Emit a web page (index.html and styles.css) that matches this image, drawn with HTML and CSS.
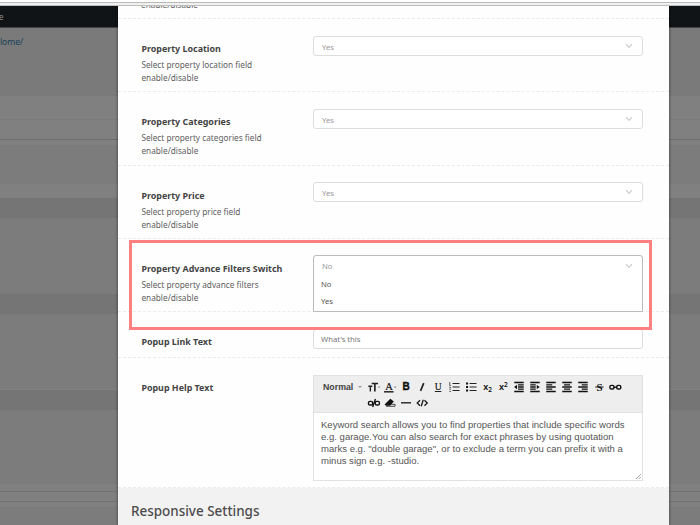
FILE: index.html
```html
<!DOCTYPE html>
<html lang="en">
<head>
<meta charset="utf-8">
<title>Property search element</title>
<link rel="stylesheet" href="styles.css">
</head>
<body>
<div class="chrome"></div>
<div class="page">
  <div class="adminbar">e</div>
  <div class="band top"><span class="crumb">lome/</span></div>
  <div class="band light a"></div>
  <div class="band light b"></div>
  <div class="band light gap1"></div>
  <div class="band mid c"></div>
  <div class="band light d"></div>
  <div class="band deep"></div>
  <div class="band mid e"></div>
  <div class="band deep"></div>
  <div class="band mid f"></div>
  <div class="band deep"></div>
  <div class="band mid g"></div>
  <div class="band light h"></div>
  <div class="band light i"></div>
  <div class="band light j"></div>
  <div class="band mid rest"></div>

  <div class="modal">
    <div class="row partial"><p class="desc">enable/disable</p></div>
    <div class="row">
      <div class="info"><h4>Property Location</h4><p class="desc">Select property location field<br>enable/disable</p></div>
      <div class="select">Yes<svg class="chev" viewBox="0 0 8 6"><path d="M1 1.2 4 4.4 7 1.2"/></svg></div>
    </div>
    <div class="row tall">
      <div class="info"><h4>Property Categories</h4><p class="desc">Select property categories field<br>enable/disable</p></div>
      <div class="select">Yes<svg class="chev" viewBox="0 0 8 6"><path d="M1 1.2 4 4.4 7 1.2"/></svg></div>
    </div>
    <div class="row raised">
      <div class="info"><h4>Property Price</h4><p class="desc">Select property price field<br>enable/disable</p></div>
      <div class="select">Yes<svg class="chev" viewBox="0 0 8 6"><path d="M1 1.2 4 4.4 7 1.2"/></svg></div>
    </div>
    <div class="row raised">
      <div class="info"><h4>Property Advance Filters Switch</h4><p class="desc">Select property advance filters<br>enable/disable</p></div>
      <div class="select open"><div class="current">No<svg class="chev" viewBox="0 0 8 6"><path d="M1 1.2 4 4.4 7 1.2"/></svg></div>
        <div class="option">No</div><div class="option">Yes</div></div>
    </div>
    <div class="row link">
      <div class="info"><h4>Popup Link Text</h4></div>
      <div class="input">What's this</div>
    </div>
    <div class="row help">
      <div class="info"><h4>Popup Help Text</h4></div>
      <div class="editor">
        <div class="toolbar">
          <div class="format">Normal<i class="tri"></i></div>
          <div class="tools">
            <svg viewBox="0 0 16 16"><path class="s" stroke-width="1.7" d="M5.6 4.5H12M8.8 4v8.5"/><path class="s" stroke-width="1.4" d="M2.3 7.2H6.3M4.3 7v5.5"/><path d="M11.8 7.5h2.6l-1.3 1.8z" fill="#888"/></svg>
            <svg viewBox="0 0 16 16"><text x="7" y="11" class="serif thin" font-size="10.5">A</text><path class="s" stroke-width="1.5" d="M2 12.8H11.5"/><path d="M11.8 7.5h2.6l-1.3 1.8z" fill="#888"/></svg>
            <svg viewBox="0 0 16 16"><text x="8" y="11.4" class="sans">B</text></svg>
            <svg viewBox="0 0 16 16"><path class="s" stroke-width="1.7" d="M9.7 4.2 6.5 11.8"/></svg>
            <svg viewBox="0 0 16 16"><text x="8.2" y="10.8" class="serif thin" font-size="9.5">U</text><path class="s" d="M4.8 12.5h6.5"/></svg>
            <svg viewBox="0 0 16 16"><path class="s" d="M6.5 4.5h7M6.5 8h7M6.5 11.5h7"/><path class="s" stroke-width=".7" d="M3.7 3v3M3.2 6.6H5M3.2 8.4H5M3.2 10.2H5M3.2 12.4H5"/></svg>
            <svg viewBox="0 0 16 16"><path class="s" d="M6.5 4.5h7M6.5 8h7M6.5 11.5h7"/><path class="s2" d="M3 4.5h2M3 8h2M3 11.5h2"/></svg>
            <svg viewBox="0 0 16 16"><text x="6.7" y="11" class="sub" font-size="9">x</text><text x="11" y="13" class="sub" font-size="6.5">2</text></svg>
            <svg viewBox="0 0 16 16"><text x="6.5" y="11" class="sub" font-size="9">x</text><text x="10.8" y="8" class="sub" font-size="6.5">2</text></svg>
            <svg viewBox="0 0 16 16"><path class="bars" d="M3.2 3.5h9.5M7 5.8h5.7M7 8h5.7M7 10.2h5.7M3.2 12.5h9.5"/><path d="M6 5.8v4.4L3 8z"/></svg>
            <svg viewBox="0 0 16 16"><path class="bars" d="M3.2 3.5h9.5M3.2 5.8h5.5M3.2 8h5.5M3.2 10.2h5.5M3.2 12.5h9.5"/><path d="M9.7 6v4l3-2z"/></svg>
            <svg viewBox="0 0 16 16"><path class="bars" d="M3.2 3.5h9.5M3.2 5.8h6M3.2 8h9.5M3.2 10.2h6M3.2 12.5h9.5"/></svg>
            <svg viewBox="0 0 16 16"><path class="bars" d="M3.2 3.5h9.5M5 5.8h6M3.2 8h9.5M5 10.2h6M3.2 12.5h9.5"/></svg>
            <svg viewBox="0 0 16 16"><path class="bars" d="M3.2 3.5h9.5M6.7 5.8h6M3.2 8h9.5M6.7 10.2h6M3.2 12.5h9.5"/></svg>
            <svg viewBox="0 0 16 16"><text x="8.4" y="11.5" class="serif" font-size="11">S</text><path class="s" d="M4.2 8h8.4"/></svg>
            <svg viewBox="0 0 16 16"><g class="ring"><rect x="2.8" y="6.4" width="4.2" height="3.6" rx="1.6"/><rect x="9.6" y="6.4" width="4.2" height="3.6" rx="1.6"/><path d="M6.2 8.2h4"/></g></svg>
            <svg viewBox="0 0 16 16"><g class="ring"><rect x="2.4" y="6.4" width="4.2" height="3.6" rx="1.6"/><rect x="9.2" y="6.4" width="4.2" height="3.6" rx="1.6"/><path d="M9.4 4 6.6 12"/></g></svg>
            <svg viewBox="0 0 16 16"><path d="M8.3 3.8 11.8 6.5 8 10.8H4L2.5 9.5z"/><path class="s" stroke-width=".8" d="M4 11.3H13M9 9.3h4v2"/></svg>
            <svg viewBox="0 0 16 16"><path class="s" stroke-width="1.4" d="M3 7.8h10"/></svg>
            <svg viewBox="0 0 16 16"><path class="s" stroke-width="1.4" d="M6 5.3 3.2 8 6 10.7M10.4 5.3 13.2 8l-2.8 2.7M9.2 4.7 7.2 11.3"/></svg>
          </div>
        </div>
        <div class="text">Keyword search allows you to find properties that include specific words<br>e.g. garage.You can also search for exact phrases by using quotation<br>marks e.g. "double garage", or to exclude a term you can prefix it with a<br>minus sign e.g. -studio.<svg class="grip" viewBox="0 0 6 6"><path d="M0 6 6 0M3.3 6 6 3.3"/></svg></div>
      </div>
    </div>
    <div class="section">Responsive Settings</div>
  </div>
  <div class="highlight"></div>
</div>
</body>
</html>
```
FILE: styles.css
```css
* { box-sizing: border-box; }
body {
  margin: 0;
  width: 700px;
  height: 525px;
  overflow: hidden;
  display: flex;
  flex-direction: column;
  font-family: "Noto Sans", sans-serif;
  font-size: 8px;
  color: #555;
}
.chrome {
  flex: none;
  height: 6px;
  background: #f1f1f1;
  border-top: 2px solid #fff;
  border-bottom: 1px solid #bdbdbd;
  box-shadow: inset 0 1px #bababa;
}
.page {
  flex: 1;
  min-height: 0;
  position: relative;
  display: flex;
  flex-direction: column;
  background: #7c7c7c;
  overflow: hidden;
}
.adminbar {
  flex: none;
  height: 22px;
  background: #111417;
  border-bottom: 1px solid #444;
  color: #888;
  line-height: 22px;
  text-indent: -1px;
  font-size: 8px;
}
.band { flex: none; }
.light { background: #808080; }
.mid { background: #7c7c7c; }
.deep { background: #757575; height: 20px; }
.top { height: 68px; background: #7a7a7a; padding-top: 7px; }
.crumb { display: block; line-height: 14px; font-size: 8.6px; letter-spacing: -.1px; color: #163f58; }
.a { height: 24px; border-bottom: 1px solid #7b7b7b; }
.b { height: 20px; border-bottom: 1px solid #6d6d6d; }
.gap1 { height: 5px; }
.c { height: 39px; }
.d { height: 14px; }
.e { height: 76px; }
.f { height: 76px; border-bottom: 1px solid #818181; }
.g { height: 74px; }
.h { height: 8px; border-bottom: 1px solid #727272; }
.i { height: 10px; border-bottom: 1px solid #727272; }
.j { height: 5px; }
.rest { flex: 1; }

.modal {
  position: absolute;
  left: 118px;
  top: 0;
  width: 551px;
  height: 519px;
  overflow: hidden;
  background: #fefefe;
  box-shadow: 0 0 3px rgba(0, 0, 0, .55);
}
.row {
  height: 73px;
  padding: 17px 26px 0 23px;
  border-bottom: 1px dashed #ececec;
  display: flex;
  align-items: flex-start;
}
.tall { height: 74px; }
.raised { padding-top: 16px; }
.raised .info { padding-top: 6.6px; }
.link { height: 46px; }
.help { height: 130px; }
.partial { height: 13px; padding-top: 0; overflow: hidden; }
.row.partial .desc { margin-top: -8px; }
.info { width: 172px; padding-top: 6px; padding-left: .4px; flex: none; white-space: nowrap; }
h4 { margin: 0; font-size: 8.92px; line-height: 13px; font-weight: 700; color: #444; }
.desc { margin: 3px 0 0; font-size: 8.25px; line-height: 13.3px; color: #606060; }
.select, .input {
  flex: none;
  width: 330px;
  height: 20px;
  border: 1px solid #ddd;
  border-radius: 3px;
  background: #fff;
  color: #999;
  font-size: 7.7px;
  line-height: 20px;
  padding: 0 9px 0 8px;
}
.select { display: flex; justify-content: space-between; align-items: flex-start; }
.chev { width: 8px; height: 6px; margin-top: 6px; fill: none; stroke: #ccc; stroke-width: 1.2; }
.open {
  display: block;
  position: relative;
  z-index: 2;
  height: 57px;
  border-color: #bbb;
  border-radius: 3px 3px 0 0;
  padding: 0;
}
.current { display: flex; justify-content: space-between; padding: 0 9px 0 8px; height: 20px; line-height: 21px; }
.current .chev { margin-top: 7px; }
.option { padding-left: 7px; height: 17px; line-height: 17px; color: #555; }
.input { color: #777; padding-left: 7px; line-height: 18px; }
.editor { width: 330px; border: 1px solid #e2e2e2; height: 106px; }
.toolbar { display: flex; height: 37px; background: #eee; padding-top: 3px; border-bottom: 1px solid #e2e2e2; }
.format {
  width: 52px;
  flex: none;
  padding-left: 9px;
  font: bold 8.8px/16px "Liberation Sans", sans-serif;
  color: #444;
  display: flex;
  align-items: center;
  height: 16px;
}
.tri { border: 2px solid transparent; border-top-color: #999; border-bottom: 0; margin-left: 5px; }
.tools { display: flex; flex-wrap: wrap; width: 260px; align-content: flex-start; }
.tools svg { width: 16.1px; height: 16px; fill: #111; flex: none; }
.s { fill: none; stroke: #222; }
.s2 { fill: none; stroke: #111; stroke-width: 2; }
.bars { fill: none; stroke: #111; stroke-width: 1.3; }
.ring { fill: none; stroke: #111; stroke-width: 1.4; }
text { text-anchor: middle; font-weight: 700; }
.serif { font-family: "Liberation Serif", serif; }
.thin { font-weight: 400; stroke: #222; stroke-width: .2; }
.sans { font-family: "Liberation Sans", sans-serif; font-size: 10px; stroke: #111; stroke-width: .4; }
.sub { font-family: "Noto Sans", sans-serif; font-weight: 600; }
.text {
  position: relative;
  height: 67px;
  background: #fff;
  padding: 6px 7px;
  font: 9.56px/12.1px "Liberation Sans", sans-serif;
  white-space: nowrap;
  color: #555;
}
.grip { position: absolute; right: 1px; bottom: 1px; width: 5px; height: 5px; stroke: #777; stroke-width: .8; fill: none; }
.section {
  height: 40px;
  background: #f2f2f2;
  padding: 14px 13px;
  font-size: 13.45px;
  line-height: 18px;
  color: #4c4c4c;
  font-weight: 500;
}
.highlight {
  position: absolute;
  left: 129px;
  top: 234px;
  width: 523px;
  height: 90px;
  border: 3px solid #ff8080;
}
```
